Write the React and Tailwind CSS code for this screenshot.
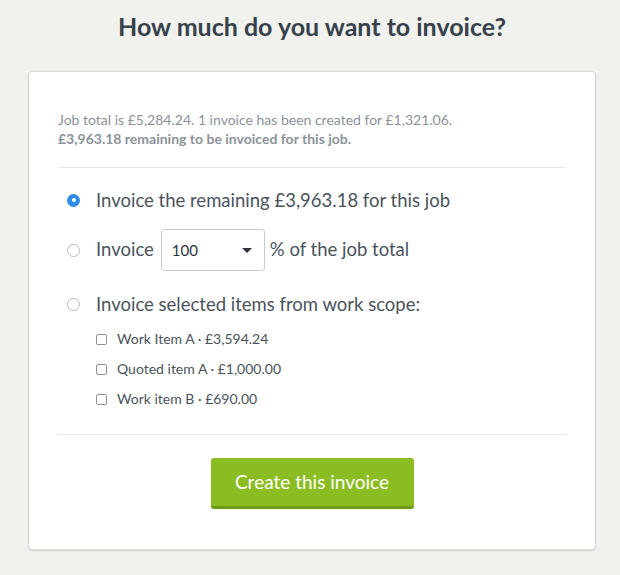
import { useState } from "react";

const items = [
  { id: "a", label: "Work Item A · £3,594.24" },
  { id: "b", label: "Quoted item A · £1,000.00" },
  { id: "c", label: "Work item B · £690.00" },
];

function Radio({ checked, onClick }) {
  return (
    <button
      type="button"
      onClick={onClick}
      className={`flex h-[13px] w-[13px] shrink-0 items-center justify-center rounded-full ${
        checked ? "bg-[#2f8ce8]" : "border border-[#b8bcc0] bg-white"
      }`}
    >
      {checked && <span className="h-[4px] w-[4px] rounded-full bg-white" />}
    </button>
  );
}

export default function App() {
  const [mode, setMode] = useState("remaining");
  const [percent, setPercent] = useState("100");
  const [picked, setPicked] = useState({});

  return (
    <div
      className="min-h-screen bg-[#f1f1ed] pb-[26px] pl-[28px] pr-[24px] pt-[10px]"
      style={{ fontFamily: "Lato, 'Open Sans', sans-serif" }}
    >
      <h1 className="text-center text-[25px] font-bold leading-[32px] text-[#36414b]">
        How much do you want to invoice?
      </h1>

      <div className="mt-[29px] rounded-[4px] border border-[#d9d9d6] bg-white px-[29px] pb-[40px] pt-[38px] shadow-[0_1px_2px_rgba(0,0,0,0.12)]">
        <p className="text-[14px] leading-[19px] text-[#8b929a]">
          Job total is £5,284.24. 1 invoice has been created for £1,321.06.
          <br />
          <span className="font-bold">£3,963.18 remaining to be invoiced for this job.</span>
        </p>

        <div className="mt-[19px] border-t border-[#e6e6e4] pt-[17px] text-[#4a535d]">
          <div className="flex items-center pl-[9px]">
            <Radio checked={mode === "remaining"} onClick={() => setMode("remaining")} />
            <span className="ml-[16px] text-[18.5px] leading-[30px]">
              Invoice the remaining £3,963.18 for this job
            </span>
          </div>

          <div className="mt-[14px] flex items-center pl-[9px]">
            <Radio checked={mode === "percent"} onClick={() => setMode("percent")} />
            <span className="ml-[16px] text-[18.5px]">Invoice</span>
            <div className="relative ml-[7px] flex h-[42px] w-[104px] items-center rounded-[3px] border border-[#c9ccce] bg-white">
              <select
                value={percent}
                onChange={(e) => setPercent(e.target.value)}
                className="h-full w-full appearance-none bg-transparent pl-[10px] text-[15px] text-[#2c343c] outline-none"
              >
                <option>100</option>
                <option>75</option>
                <option>50</option>
                <option>25</option>
              </select>
              <svg
                className="pointer-events-none absolute right-[12px] top-[18px]"
                width="10"
                height="5"
                viewBox="0 0 10 5"
              >
                <path d="M0 0h10L5 5z" fill="#2c343c" />
              </svg>
            </div>
            <span className="ml-[5px] text-[18.5px]">% of the job total</span>
          </div>

          <div className="mt-[18px] flex items-center pl-[9px]">
            <Radio checked={mode === "items"} onClick={() => setMode("items")} />
            <span className="ml-[16px] text-[18.5px] leading-[30px]">
              Invoice selected items from work scope:
            </span>
          </div>

          <div className="mt-[10px] flex flex-col gap-[10px] pl-[38px]">
            {items.map((it) => (
              <label key={it.id} className="flex items-center">
                <input
                  type="checkbox"
                  checked={!!picked[it.id]}
                  onChange={() => setPicked({ ...picked, [it.id]: !picked[it.id] })}
                  className="h-[11px] w-[11px] appearance-none rounded-[2px] border border-[#8d9399] bg-white checked:bg-[#2f8ce8]"
                />
                <span className="ml-[10px] text-[14px] leading-[20px] text-[#4a535d]">
                  {it.label}
                </span>
              </label>
            ))}
          </div>
        </div>

        <div className="mt-[25px] flex justify-center border-t border-[#e6e6e4] pt-[23px]">
          <button
            type="button"
            className="h-[51px] w-[203px] rounded-[3px] border-b-[3px] border-[#6f9c17] bg-[#8bbd22] text-[19px] text-white"
          >
            Create this invoice
          </button>
        </div>
      </div>
    </div>
  );
}
